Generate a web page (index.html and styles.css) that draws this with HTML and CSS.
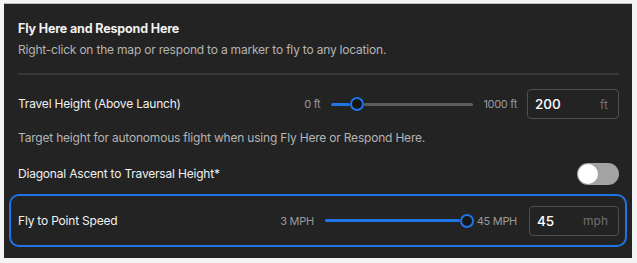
FILE: index.html
```
<!DOCTYPE html>
<html>
<head>
<meta charset="utf-8">
<link rel="stylesheet" href="styles.css">
</head>
<body>
<div class="panel">
  <div class="header">
    <div class="title">Fly Here and Respond Here</div>
    <div class="desc">Right-click on the map or respond to a marker to fly to any location.</div>
  </div>
  <div class="divider"></div>
  <div class="row row-height">
    <div class="label">Travel Height (Above Launch)</div>
    <div class="control">
      <span class="range-label min1">0 ft</span>
      <div class="track track1">
        <div class="fill" style="width:19px"></div>
        <div class="thumb"></div>
        <div class="rest"></div>
      </div>
      <span class="range-label max1">1000 ft</span>
      <div class="input input1"><span class="val">200</span><span class="unit">ft</span></div>
    </div>
  </div>
  <div class="desc note">Target height for autonomous flight when using Fly Here or Respond Here.</div>
  <div class="row row-toggle">
    <div class="label">Diagonal Ascent to Traversal Height*</div>
    <div class="toggle"><div class="knob"></div></div>
  </div>
  <div class="row highlight">
    <div class="label">Fly to Point Speed</div>
    <div class="control">
      <span class="range-label min2">3 MPH</span>
      <div class="track track2">
        <div class="fill" style="width:136px"></div>
        <div class="thumb"></div>
      </div>
      <span class="range-label max2">45 MPH</span>
      <div class="input input2"><span class="val">45</span><span class="unit">mph</span></div>
    </div>
  </div>
</div>
</body>
</html>
```
FILE: styles.css
```
* { box-sizing: border-box; }
html, body {
  margin: 0;
  padding: 0;
  background: #f4f4f4;
  width: 637px;
  height: 263px;
  overflow: hidden;
  font-family: Inter, "Helvetica Neue", Arial, sans-serif;
}
body { padding: 3px 0 0 4px; }
.panel {
  width: 628px;
  height: 255px;
  background: #232323;
  border-top: 1px solid #bdbdbd;
  padding: 17px 13px 0 14px;
  color: #f0f0f0;
}
.title {
  font-size: 12.5px;
  font-weight: 700;
  line-height: 16px;
  letter-spacing: -0.15px;
}
.desc {
  font-size: 12px;
  color: #b4b4b4;
  line-height: 16px;
  letter-spacing: -0.2px;
}
.header .desc { margin-top: 5px; }
.divider {
  height: 2px;
  background: #373737;
  margin-top: 15px;
}
.row {
  display: flex;
  align-items: center;
}
.label {
  flex: 1;
  font-size: 12px;
  line-height: 16px;
  letter-spacing: -0.2px;
  color: #f0f0f0;
}
.row-height { margin-top: 14px; height: 30px; }
.note { margin-top: 11px; }
.row-toggle { margin-top: 17px; height: 22px; }
.control {
  display: flex;
  align-items: center;
}
.range-label {
  font-size: 11px;
  color: #9a9a9a;
  letter-spacing: -0.3px;
}
.track {
  display: flex;
  align-items: center;
  height: 14px;
}
.track1 { width: 142px; margin-left: 11px; margin-right: 10px; }
.track2 { width: 149px; margin-left: 11px; margin-right: 3px; }
.fill { height: 3px; background: #1f74e6; border-radius: 2px; }
.rest { flex: 1; height: 3px; background: #5e5e5e; border-radius: 2px; }
.thumb {
  width: 14px;
  height: 14px;
  border-radius: 50%;
  border: 2px solid #1f74e6;
  background: #161616;
  flex: none;
}
.input {
  display: flex;
  align-items: center;
  justify-content: space-between;
  height: 30px;
  border: 1px solid #4e4e4e;
  border-radius: 4px;
  padding: 0 10px 0 7px;
}
.input1 { width: 92px; margin-left: 10px; }
.input2 { width: 90px; margin-left: 12px; }
.val { font-size: 13.5px; color: #ffffff; font-weight: 500; }
.unit { font-size: 12px; color: #707070; }
.toggle {
  width: 42px;
  height: 22px;
  border-radius: 11px;
  background: #a3a3a3;
  padding: 1px;
}
.knob {
  width: 20px;
  height: 20px;
  border-radius: 50%;
  background: #ffffff;
}
.highlight {
  margin: 9px -8px 0 -9px;
  height: 53px;
  border: 2px solid #1f74e6;
  border-radius: 10px;
  padding: 0 6px 0 7px;
}
```
